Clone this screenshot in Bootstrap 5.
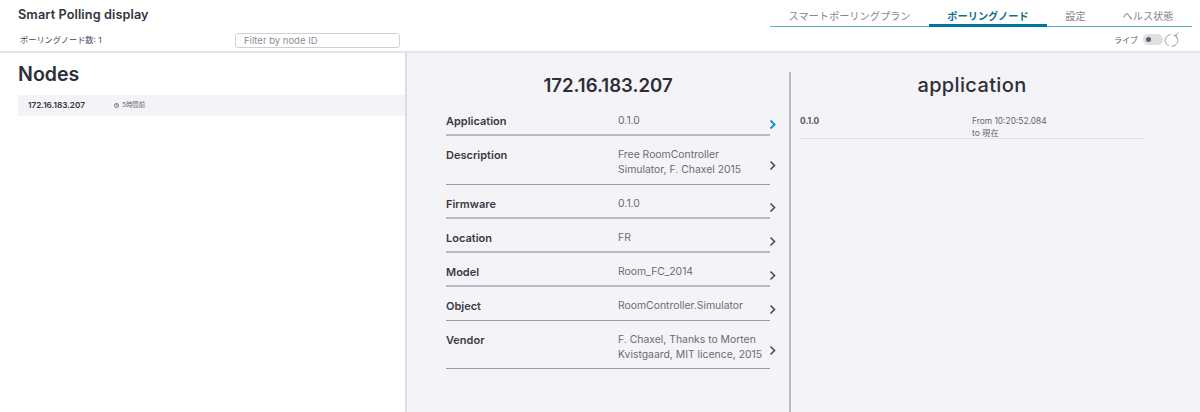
<!DOCTYPE html>
<html lang="ja">
<head>
<meta charset="utf-8">
<title>Smart Polling display</title>
<link href="https://cdn.jsdelivr.net/npm/bootstrap@5.3.0/dist/css/bootstrap.min.css" rel="stylesheet">
<style>
html,body{height:412px;overflow:hidden}
body{font-family:"Inter","Noto Sans CJK JP",sans-serif;color:#2e2e38;background:#fff;font-size:10px}
.top-bar{height:53px;border-bottom:2px solid #e3e3e8}
.brand-side{width:407px;padding-left:18px}
.brand-name{font-size:12.7px;font-weight:600;line-height:15px;margin:7px 0 0;color:#33333d;letter-spacing:.1px}
.count-row{height:17px;margin-top:10px;padding-right:7px}
.count-label{font-size:8.2px;color:#45454f;padding-left:2px;width:217px}
.filter-box{width:165px;height:15px;border:1px solid #cfd0d6;border-radius:3px;font-size:9.5px;padding:0 8px;color:#333;background:#fff;outline:0;font-family:inherit}
.filter-box::placeholder{color:#8d8d96}
.nav-side{width:422px;margin-left:363px;margin-top:0}
.tab-strip{height:27px;border-bottom:1px solid #5fb0c9}
.tab-item{font-size:10.2px;color:#85858e;line-height:14px;padding:9px 0 3px;text-align:center;white-space:nowrap}
.tab-one{width:159px}
.tab-two{width:118px;color:#0e6e90;font-weight:700;border-bottom:3px solid #0077a0;height:27px}
.tab-three{width:57px}
.tab-four{width:88px}
.live-row{height:17px;margin-top:4px;padding-right:12px;font-size:8px;color:#55555f}
.live-switch{width:20px;height:11px;border-radius:5.5px;background:#dedee3;margin-left:5px;margin-right:1px;padding-left:3px}
.live-dot{width:5px;height:5px;border-radius:50%;background:#5e5e68}
.main-area{height:359px}
.list-pane{width:405px;padding-left:18px;flex:none}
.pane-title{font-size:19.6px;font-weight:600;line-height:24px;margin:9px 0 9px;color:#2e2e38}
.node-row{height:21px;background:#f4f4f8;font-size:8.2px;padding-left:10px}
.node-ip{width:86px;font-weight:600;color:#33333d}
.node-age{font-size:6.4px;color:#66666f;gap:3px}
.detail-pane{background:#f4f4f8;border-left:2px solid #dcdce2;flex:1}
.info-col{width:382px;flex:none;padding:19px 19px 0 39px}
.info-title{font-size:18.6px;font-weight:600;line-height:26px;text-align:center;margin:0;color:#2e2e38;width:324px}
.info-list{margin-top:4px}
.info-row{width:324px;padding-top:12px;border-bottom:1px solid #9a9aa4;position:relative;font-size:11px;line-height:14.5px}
.row-thick{border-bottom:2px solid #b9b9c2}
.row-two{height:49px}
.row-end{height:48px}
.row-std{height:34px}
.info-key{width:172px;font-weight:600;color:#3a3a44;flex:none}
.info-val{color:#6b6b74;white-space:nowrap;font-size:10.4px}
.chev{position:absolute;left:323px;width:7px;height:11px;fill:none;stroke:#4a4a54;stroke-width:1.6}
.chev-live{stroke:#1593cf;stroke-width:2}
.chev-a{top:17px}
.chev-b{top:24px}
.hist-col{border-left:2px solid #bdbdc6;margin-top:19px;padding:0 0 0 9px;flex:none;width:355px}
.hist-title{font-size:20px;font-weight:500;line-height:26px;text-align:center;margin:0;width:344px;color:#2e2e38;letter-spacing:.35px}
.hist-row{width:344px;margin-top:16px;height:25px;border-bottom:1px solid #dfdfe4;font-size:8.4px;line-height:12px;color:#66666f;padding-top:1px}
.hist-ver{width:172px;font-weight:700;color:#55555f}
</style>
</head>
<body>
<header class="top-bar d-flex">
  <div class="brand-side">
    <p class="brand-name">Smart Polling display</p>
    <div class="count-row d-flex align-items-center">
      <span class="count-label">ポーリングノード数: 1</span>
      <input class="filter-box" type="text" placeholder="Filter by node ID">
    </div>
  </div>
  <div class="nav-side">
    <nav class="tab-strip d-flex">
      <div class="tab-item tab-one">スマートポーリングプラン</div>
      <div class="tab-item tab-two">ポーリングノード</div>
      <div class="tab-item tab-three">設定</div>
      <div class="tab-item tab-four">ヘルス状態</div>
    </nav>
    <div class="live-row d-flex justify-content-end align-items-center">
      <span>ライブ</span>
      <span class="live-switch d-flex align-items-center"><span class="live-dot"></span></span>
      <svg width="16" height="15" viewBox="0 0 16 15" fill="none" stroke="#9a9aa3" stroke-width="1"><path d="M6.500 2.500C3.300 3.300 1 5.500 1 8.500c0 2.400 1.600 4.300 3.800 5"/><path d="M7.500 14.200c3.800 0 6.300-2.500 6.300-5.700 0-2-1-3.800-2.500-5"/><path d="M9.500 3.800 12 3 14.500 1"/><path d="M12 3 12.300 6"/></svg>
    </div>
  </div>
</header>
<main class="main-area d-flex">
  <section class="list-pane">
    <h1 class="pane-title">Nodes</h1>
    <div class="node-row d-flex align-items-center">
      <span class="node-ip">172.16.183.207</span>
      <span class="node-age d-flex align-items-center"><svg width="5" height="5" viewBox="0 0 6 6" fill="none" stroke="#55555f" stroke-width=".9"><circle cx="3" cy="3" r="2.500"/><path d="M3 1.500V3H4.300"/></svg>5時間前</span>
    </div>
  </section>
  <section class="detail-pane d-flex">
    <div class="info-col">
      <h2 class="info-title">172.16.183.207</h2>
      <div class="info-list">
        <div class="info-row row-std row-thick d-flex"><div class="info-key">Application</div><div class="info-val">0.1.0</div><svg class="chev chev-live chev-a" viewBox="0 0 7 11"><path d="M1.500 1.500 5.500 5.500 1.500 9.500"/></svg></div>
        <div class="info-row row-two d-flex"><div class="info-key">Description</div><div class="info-val">Free RoomController<br>Simulator, F. Chaxel 2015</div><svg class="chev chev-b" viewBox="0 0 7 11"><path d="M1.500 1.500 5.500 5.500 1.500 9.500"/></svg></div>
        <div class="info-row row-std row-thick d-flex"><div class="info-key">Firmware</div><div class="info-val">0.1.0</div><svg class="chev chev-a" viewBox="0 0 7 11"><path d="M1.500 1.500 5.500 5.500 1.500 9.500"/></svg></div>
        <div class="info-row row-std row-thick d-flex"><div class="info-key">Location</div><div class="info-val">FR</div><svg class="chev chev-a" viewBox="0 0 7 11"><path d="M1.500 1.500 5.500 5.500 1.500 9.500"/></svg></div>
        <div class="info-row row-std row-thick d-flex"><div class="info-key">Model</div><div class="info-val">Room_FC_2014</div><svg class="chev chev-a" viewBox="0 0 7 11"><path d="M1.500 1.500 5.500 5.500 1.500 9.500"/></svg></div>
        <div class="info-row row-std d-flex"><div class="info-key">Object</div><div class="info-val">RoomController.Simulator</div><svg class="chev chev-a" viewBox="0 0 7 11"><path d="M1.500 1.500 5.500 5.500 1.500 9.500"/></svg></div>
        <div class="info-row row-end d-flex"><div class="info-key">Vendor</div><div class="info-val">F. Chaxel, Thanks to Morten<br>Kvistgaard, MIT licence, 2015</div><svg class="chev chev-b" viewBox="0 0 7 11"><path d="M1.500 1.500 5.500 5.500 1.500 9.500"/></svg></div>
      </div>
    </div>
    <div class="hist-col">
      <h2 class="hist-title">application</h2>
      <div class="hist-row d-flex">
        <div class="hist-ver">0.1.0</div>
        <div>From 10:20:52.084<br>to 現在</div>
      </div>
    </div>
  </section>
</main>
</body>
</html>
